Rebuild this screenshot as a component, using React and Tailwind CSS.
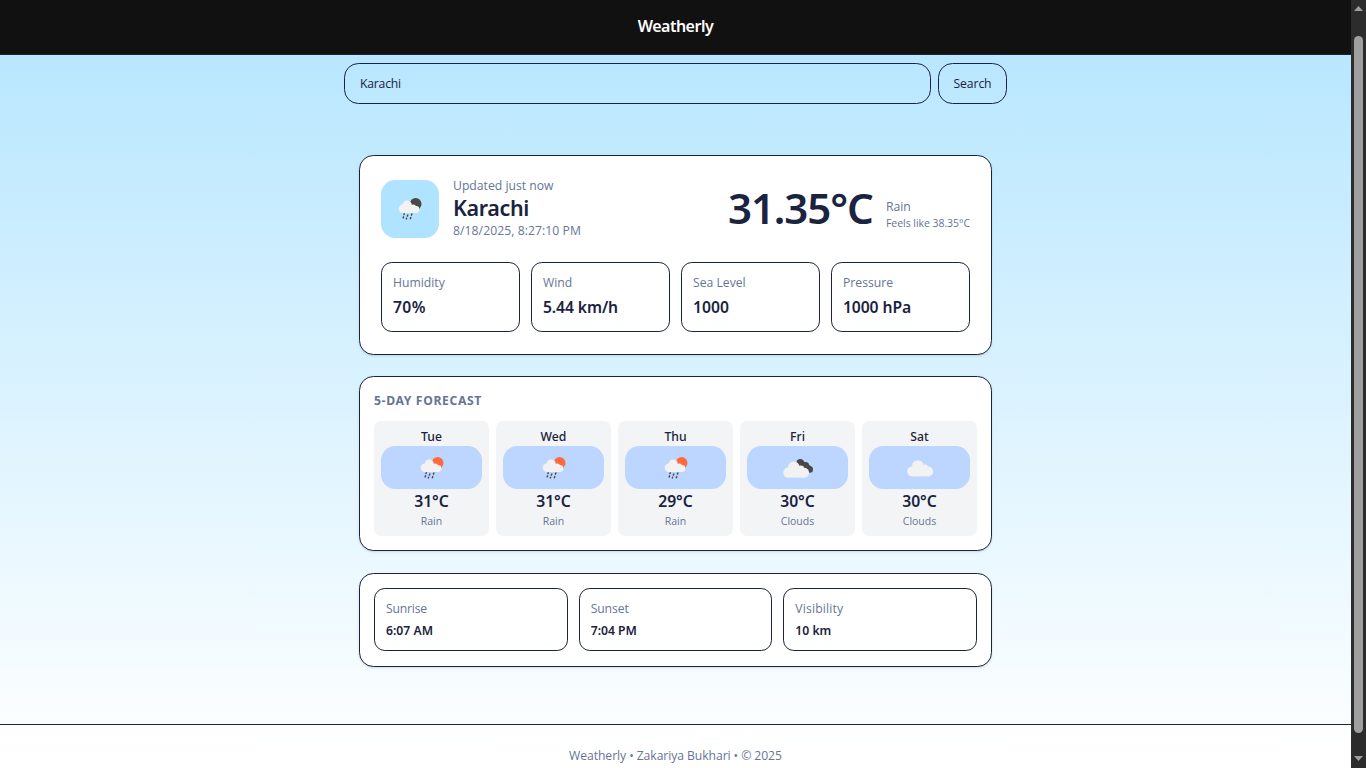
import React from "react";

const LIGHT = "font-['Open_Sans','Noto_Sans',sans-serif]";

const stats = [
  { label: "Humidity", value: "70%", tracking: "tracking-[0.4px]" },
  { label: "Wind", value: "5.44 km/h", tracking: "tracking-[-0.1px]" },
  { label: "Sea Level", value: "1000", tracking: "" },
  { label: "Pressure", value: "1000 hPa", tracking: "tracking-[-0.1px]" },
];

const forecast = [
  { day: "Tue", icon: "rain", temp: "31°C", text: "Rain" },
  { day: "Wed", icon: "rain", temp: "31°C", text: "Rain" },
  { day: "Thu", icon: "rain", temp: "29°C", text: "Rain" },
  { day: "Fri", icon: "broken", temp: "30°C", text: "Clouds" },
  { day: "Sat", icon: "cloud", temp: "30°C", text: "Clouds" },
];

const details = [
  { label: "Sunrise", value: "6:07 AM", tracking: "tracking-[-0.2px]" },
  { label: "Sunset", value: "7:04 PM", tracking: "tracking-[-0.1px]" },
  { label: "Visibility", value: "10 km", tracking: "tracking-[0.15px]" },
];

function BigCloud() {
  return (
    <g fill="#f2f2f2">
      <circle cx="-7.8" cy="3.4" r="5" />
      <circle cx="-2.2" cy="-2.1" r="5.7" />
      <circle cx="4.8" cy="-0.2" r="3.4" />
      <circle cx="8.2" cy="3.5" r="4.9" />
      <rect x="-8" y="0" width="16.5" height="8.4" />
    </g>
  );
}

function WeatherIcon({ kind, disc = "#ff6a3d" }) {
  return (
    <svg width="40" height="40" viewBox="-20 -20 40 40">
      {kind === "rain" && (
        <>
          <circle cx="5.6" cy="-5" r="5.9" fill={disc} />
          <g fill="#f2f2f2">
            <circle cx="-7.2" cy="-0.3" r="4.2" />
            <circle cx="-2.8" cy="-3.9" r="4.6" />
            <circle cx="3.2" cy="-1.6" r="2.9" />
            <circle cx="6" cy="0.5" r="3.4" />
            <path d="M-7.3-3h8L6 .5v3.4H-7.3z" />
          </g>
          <g stroke="#484848" strokeWidth="1.4" strokeLinecap="round">
            <path d="M-5.7 4.8l-.4 .9M-6.4 7.8l-.5 1.1M-2.2 6l-.5 1.1M-3.4 9.2l-.3 .7M1.9 5l-.5 1.1M.8 8.6l-.5 1.1" />
          </g>
        </>
      )}
      {kind === "broken" && (
        <>
          <g fill="#484848">
            <circle cx="2.2" cy="-5.4" r="3.7" />
            <circle cx="7.4" cy="-2" r="3.9" />
            <circle cx="11.7" cy="1.5" r="3.3" />
            <path d="M3-8.6L14 -1L10 5L1-2z" />
          </g>
          <g transform="translate(-2 1.2)">
            <BigCloud />
          </g>
        </>
      )}
      {kind === "cloud" && <BigCloud />}
    </svg>
  );
}

function Card({ className, children }) {
  return (
    <section className={`rounded-[14.4px] border border-[#1a2340] bg-white shadow-sm ${className}`}>
      {children}
    </section>
  );
}

function Scrollbar() {
  return (
    <div className="flex w-[15px] shrink-0 flex-col items-center bg-[#2c2c2c]">
      <svg className="mt-[6px] shrink-0" width="9" height="5" viewBox="0 0 9 5">
        <path d="M4.5 0L9 5H0z" fill="#9f9f9f" />
      </svg>
      <div className="mt-[25px] h-[697px] w-[9px] rounded-full bg-[#9f9f9f]" />
      <svg className="mt-[23px] shrink-0" width="9" height="5" viewBox="0 0 9 5">
        <path d="M4.5 5L9 0H0z" fill="#9f9f9f" />
      </svg>
    </div>
  );
}

export default function App() {
  return (
    <div className="flex h-[768px] w-[1366px] overflow-hidden font-['Noto_Sans',sans-serif] text-[12.2px] leading-[18px] text-[#1a2340]">
      <div className="flex flex-1 flex-col bg-linear-to-b from-[#b3e5ff] to-white">
        <header className="flex h-[55px] shrink-0 items-center justify-center border-b border-[#1a2340] bg-[#111] pb-[3px] text-[16px] font-semibold tracking-[-0.5px] text-white">
          Weatherly
        </header>

        <div className={`mt-2 ml-[344px] flex h-[41px] w-[663px] shrink-0 gap-[7px] ${LIGHT}`}>
          <div className="flex flex-1 items-center rounded-[14.4px] border border-[#1a2340] px-[15px] tracking-[-0.2px]">
            Karachi
          </div>
          <button className="w-[69px] rounded-[14.4px] border border-[#1a2340] tracking-[-0.1px]">Search</button>
        </div>

        <main className="mt-[51px] ml-[359px] flex w-[633px] shrink-0 flex-col">
          <Card className="h-[200px] px-[21px] pt-[21px]">
            <div className="flex h-[63px] items-center">
              <div className="flex size-[58px] items-center justify-center rounded-[14.4px] bg-[#b0e3ff]">
                <WeatherIcon kind="rain" disc="#484848" />
              </div>
              <div className="ml-[14px] flex-1">
                <p className={`text-[#667596] ${LIGHT}`}>Updated just now</p>
                <h1 className="pb-[2px] text-[21.5px] leading-[25px] font-semibold tracking-[-0.37px]">Karachi</h1>
                <p className={`tracking-[0.06px] text-[#667596] ${LIGHT}`}>8/18/2025, 8:27:10 PM</p>
              </div>
              <p className="w-[145px] pb-[2px] text-[42px] leading-[44px] font-semibold tracking-[-1.1px] whitespace-nowrap">31.35°C</p>
              <div className={`ml-[13px] w-[84px] pt-3 whitespace-nowrap text-[#667596] ${LIGHT}`}>
                <p>Rain</p>
                <p className="text-[10.5px] leading-[15px] tracking-[-0.05px]">Feels like 38.35°C</p>
              </div>
            </div>
            <div className="mt-[22px] grid grid-cols-4 gap-[11px]">
              {stats.map((s) => (
                <div key={s.label} className="h-[70px] rounded-[10.8px] border border-[#1a2340] px-[11px] pt-[11px]">
                  <p className={`text-[#667596] ${LIGHT}`}>{s.label}</p>
                  <p className={`mt-[3px] text-[15.7px] leading-[25px] font-semibold ${s.tracking}`}>{s.value}</p>
                </div>
              ))}
            </div>
          </Card>

          <Card className="mt-[21px] h-[175px] px-[14px] pt-[15px]">
            <h2 className="font-bold tracking-[0.63px] text-[#667596]">5-DAY FORECAST</h2>
            <div className="mt-[11px] grid grid-cols-5 gap-[7px]">
              {forecast.map((f) => (
                <div key={f.day} className="flex h-[115px] flex-col rounded-[7.2px] bg-[#f3f4f6] px-[7px] pt-[7px] text-center">
                  <p className="font-medium">{f.day}</p>
                  <div className="flex h-[43px] items-center justify-center rounded-[14.4px] bg-[#bcd6ff]">
                    <WeatherIcon kind={f.icon} />
                  </div>
                  <p className="text-[15.7px] leading-[25px] font-semibold">{f.temp}</p>
                  <p className={`text-[10.5px] leading-[15px] text-[#667596] ${LIGHT}`}>{f.text}</p>
                </div>
              ))}
            </div>
          </Card>

          <Card className="mt-[22px] h-[94px] p-[14px]">
            <div className="grid grid-cols-3 gap-[11px]">
              {details.map((d) => (
                <div key={d.label} className="h-[63px] rounded-[10.8px] border border-[#1a2340] px-[11px] pt-[11px]">
                  <p className={`text-[#667596] ${d.tracking} ${LIGHT}`}>{d.label}</p>
                  <p className="mt-1 font-semibold">{d.value}</p>
                </div>
              ))}
            </div>
          </Card>
        </main>

        <footer className={`mt-[57px] h-11 border-t border-[#1a2340] bg-white/80 pt-[22px] text-center tracking-[-0.08px] text-[#667596] ${LIGHT}`}>
          Weatherly • Zakariya Bukhari • © 2025
        </footer>
      </div>
      <Scrollbar />
    </div>
  );
}
